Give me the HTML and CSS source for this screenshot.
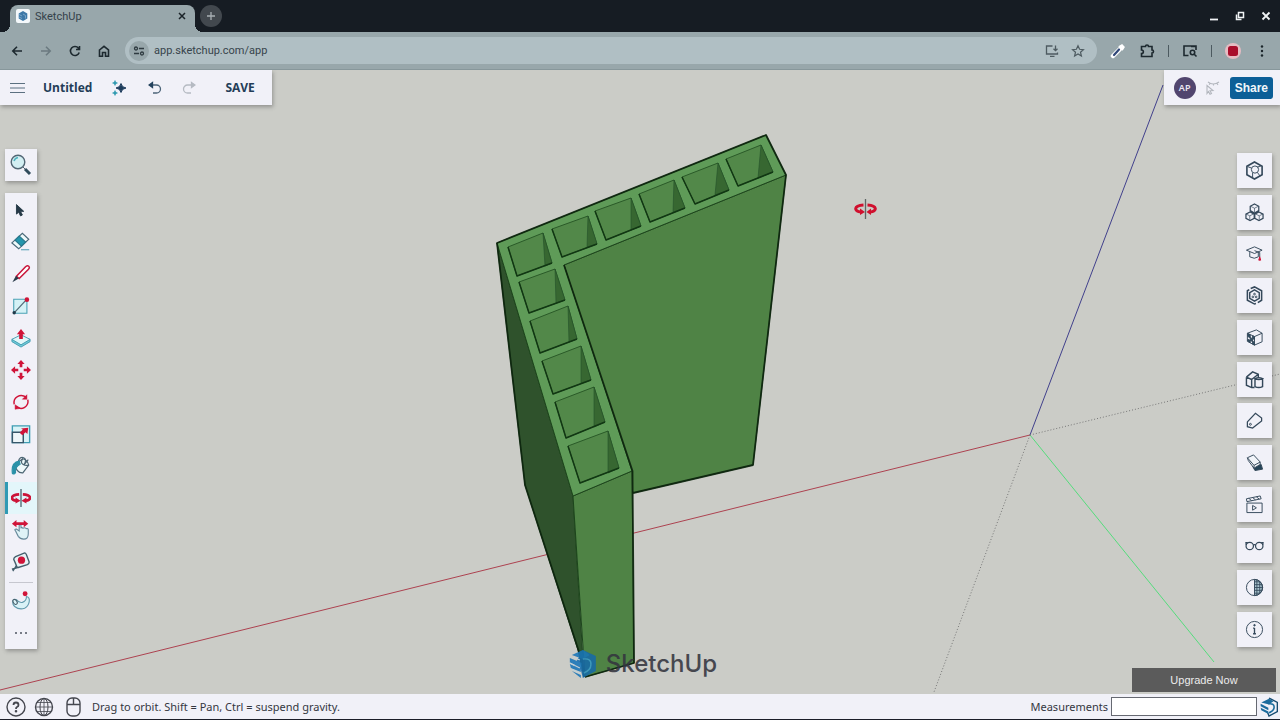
FILE: index.html
```html
<!DOCTYPE html>
<html lang="en">
<head>
<meta charset="utf-8">
<meta name="viewport" content="width=device-width, initial-scale=1">
<title>SketchUp</title>
<link rel="stylesheet" href="styles.css">
</head>
<body>
<header class="browser">
  <div class="tabstrip">
    <div class="tab">
      <svg class="favicon" viewBox="0 0 14 14"><rect width="14" height="14" rx="2" fill="#f4f8fb"/><path d="M7 2l4.300 2.500v5L7 12 2.700 9.500v-5z" fill="#3c78a8"/><path d="M3 5.500l3 1.500M3 8l3 1.500M7 5l2.500 1.500v3" stroke="#8fb8d6" fill="none" stroke-width=".7"/></svg>
      <span class="tab-title">SketchUp</span>
      <button class="icon-btn tab-close" aria-label="Close tab"><svg width="8" height="8" viewBox="0 0 8 8"><path d="M1 1l6 6M7 1l-6 6" stroke="#1b2429" stroke-width="1.500"/></svg></button>
    </div>
    <button class="icon-btn new-tab" aria-label="New tab"><svg width="10" height="10" viewBox="0 0 10 10"><path d="M5 1v8M1 5h8" stroke="#a9b0b4" stroke-width="1.300"/></svg></button>
    <div class="window-controls">
      <button class="icon-btn" aria-label="Minimize"><svg width="12" height="12" viewBox="0 0 12 12"><path d="M2 9.500h8" stroke="#f0f3f5" stroke-width="1.800"/></svg></button>
      <button class="icon-btn" aria-label="Restore"><svg width="12" height="12" viewBox="0 0 12 12" fill="none" stroke="#f0f3f5" stroke-width="1.500"><path d="M4.500 2.500h5v5h-5zM2.500 4.500v5h5"/></svg></button>
      <button class="icon-btn" aria-label="Close"><svg width="12" height="12" viewBox="0 0 12 12"><path d="M2.500 2.500l7 7M9.500 2.500l-7 7" stroke="#f0f3f5" stroke-width="1.800"/></svg></button>
    </div>
  </div>
  <div class="navbar">
    <div class="nav-buttons">
      <button class="icon-btn" aria-label="Back"><svg width="14" height="14" viewBox="0 0 14 14" class="nav-ico"><path d="M12 7H3M7 2.800L2.800 7 7 11.200"/></svg></button>
      <button class="icon-btn" aria-label="Forward" disabled><svg width="14" height="14" viewBox="0 0 14 14" class="nav-ico faded"><path d="M2 7h9M7 2.800L11.200 7 7 11.200"/></svg></button>
      <button class="icon-btn" aria-label="Reload"><svg width="14" height="14" viewBox="0 0 14 14" class="nav-ico"><path d="M11.200 8.500A4.500 4.500 0 1 1 10.500 4.200L11.500 5.300M11.500 2v3.500H8"/></svg></button>
      <button class="icon-btn" aria-label="Home"><svg width="14" height="14" viewBox="0 0 14 14" class="nav-ico"><path d="M2.500 6L7 2.300 11.500 6v6.200h-3V8.500h-3v3.700h-3z"/></svg></button>
    </div>
    <div class="omnibox">
      <span class="site-info"><svg width="12" height="12" viewBox="0 0 12 12" fill="none" stroke="#2f3b41" stroke-width="1.300"><circle cx="3" cy="3.500" r="1.500"/><path d="M6 3.500h5M1 8.500h5"/><circle cx="9" cy="8.500" r="1.500"/></svg></span>
      <input class="url" type="text" aria-label="Address" value="app.sketchup.com/app">
      <button class="icon-btn" aria-label="Install app"><svg width="14" height="14" viewBox="0 0 14 14" fill="none" stroke="#4e5b61" stroke-width="1.300"><path d="M7.500 2H1.500v8h11V8.500M5 12.300h4.500M10.500 1.500v5M8.500 4.700l2 2 2-2"/></svg></button>
      <button class="icon-btn" aria-label="Bookmark"><svg width="14" height="14" viewBox="0 0 14 14" fill="none" stroke="#4e5b61" stroke-width="1.200"><path d="M7 1.800l1.600 3.500 3.800.4-2.900 2.500.9 3.800L7 10l-3.400 2 .9-3.800L1.600 5.700l3.800-.4z"/></svg></button>
    </div>
    <div class="extensions">
      <button class="icon-btn" aria-label="Color picker"><svg width="16" height="16" viewBox="0 0 16 16"><path d="M3 13l7-7" stroke="#fff" stroke-width="4.500" stroke-linecap="round"/><path d="M9.500 3.500l3 3 1.500-2.500-2-2z" fill="#fff" stroke="#fff" stroke-width="1.500"/><path d="M4 12l5-5.500" stroke="#304778" stroke-width="2.200" stroke-linecap="round"/></svg></button>
      <button class="icon-btn" aria-label="Extensions"><svg width="16" height="16" viewBox="0 0 16 16" class="nav-ico"><path d="M2.500 3.500h4c0-2 3-2 3 0H13V7c2 0 2 3 0 3v3.500H2.500V10.500c2.500 0 2.500-3.500 0-3.500z"/></svg></button>
      <span class="sep"></span>
      <button class="icon-btn" aria-label="Search tabs"><svg width="16" height="16" viewBox="0 0 16 16" class="nav-ico"><path d="M6.500 12.500H2V3h12v4M9 3.500h5"/><circle cx="10.500" cy="9.500" r="2.200"/><path d="M12.200 11.200l2.300 2.300"/></svg></button>
      <span class="sep"></span>
      <button class="icon-btn" aria-label="Recorder"><svg width="16" height="16" viewBox="0 0 16 16"><circle cx="8" cy="8" r="8" fill="#e6bcc3"/><rect x="3" y="3" width="10" height="10" rx="2.500" fill="#a90d2b"/></svg></button>
      <button class="icon-btn" aria-label="Menu"><svg width="16" height="16" viewBox="0 0 16 16" fill="#1a2429"><circle cx="8" cy="3.500" r="1.200"/><circle cx="8" cy="8" r="1.200"/><circle cx="8" cy="12.500" r="1.200"/></svg></button>
    </div>
  </div>
</header>

<main class="workspace">
  <svg class="scene" viewBox="0 70 1280 624" preserveAspectRatio="xMidYMid slice" role="img" aria-label="Green L-shaped hollow wall model">
    <g fill="none" stroke-width="1">
      <path d="M0 690L1030 435" stroke="#ad4250"/>
      <path d="M1030 435L1163 85" stroke="#41408c"/>
      <path d="M1030 435L1214 662" stroke="#55dc7c"/>
      <path d="M1030 435L1280 374M1030 435L934 692" stroke="#777" stroke-dasharray="1 2"/>
    </g>
    <g stroke="#1d451c" stroke-width="1" stroke-linejoin="round">
      <path d="M497 243L573 496L584 677L578 650L525 485z" fill="#2f522c"/>
      <path d="M564 265L786 175L753 465L633 493z" fill="#4f8345"/>
      <path d="M573 496L632 471L634 663L585 677z" fill="#4f8345"/>
      <path d="M497 243L766 135L786 175L564 265L632 471L573 496z" fill="#5f9b58"/>
    </g>
    <g fill="#528849" stroke="#2a5a28" stroke-width="1" stroke-linejoin="round">
      <path d="M508 247L543 233L552 263L517 276z"/>
      <path d="M552 229L588 216L597 244L562 257z"/>
      <path d="M595 211L631 198L641 226L606 240z"/>
      <path d="M639 194L674 180L685 208L650 222z"/>
      <path d="M682 177L718 163L729 190L695 204z"/>
      <path d="M726 159L761 145L773 172L738 186z"/>
      <path d="M519 282L555 269L565 300L529 313z"/>
      <path d="M530 321L568 306L577 339L540 353z"/>
      <path d="M542 361L581 346L591 380L553 394z"/>
      <path d="M555 402L594 387L605 422L566 438z"/>
      <path d="M568 446L608 431L619 468L580 483z"/>
    </g>
    <path fill="#376731" stroke="#24502a" stroke-width=".6" d="M543 233L552 263L545 266zM588 216L597 244L587 247zM631 198L641 226L631 230zM674 180L685 208L673 212zM718 163L729 190L715 195zM761 145L773 172L758 178zM555 269L565 300L556 303zM568 306L577 339L569 342zM581 346L591 380L581 383zM594 387L605 422L594 427zM608 431L619 468L608 473z"/>
    <path fill="none" stroke="#113713" stroke-width="1.500" stroke-linejoin="round" d="M508 247L517 276L552 263M552 229L562 257L597 244M595 211L606 240L641 226M639 194L650 222L685 208M682 177L695 204L729 190M726 159L738 186L773 172M519 282L529 313L565 300M530 321L540 353L577 339M542 361L553 394L591 380M555 402L566 438L605 422M568 446L580 483L619 468"/>
    <path fill="none" stroke="#0c240d" stroke-width="1.800" stroke-linejoin="round" d="M585 677L634 663L632.500 471L564 265M633 493L753 465L786 175L766 135L497 243L525 485L579 652" stroke-opacity=".9"/>
    <g transform="translate(855 199)">
      <path d="M8.500 6C-1.500 6.500 -1.500 12.500 6 13M12.500 6c10 .5 10 6.500 2.500 7" fill="none" stroke="#d0102e" stroke-width="3"/>
      <path d="M5 9.500l5 3.500-5 3zM16 9.500l-4.500 3.500 4.500 3z" fill="#d0102e"/><path d="M10.500 0v20" stroke="#5f6664" stroke-width="1.300"/>
    </g>
  </svg>

  <div class="panel topbar">
    <button class="icon-btn" aria-label="Main menu"><svg width="16" height="12" viewBox="0 0 16 12" stroke="#5b7080" stroke-width="1.200"><path d="M0 1.500h15M0 6h15M0 10.500h15"/></svg></button>
    <button class="text-btn doc-name">Untitled</button>
    <button class="icon-btn" aria-label="Assistant"><svg width="16" height="16" viewBox="0 0 16 16"><path d="M9 3.500q.8 4 5 4.500-4.200.5-5 4.500-.8-4-5-4.500 4.200-.5 5-4.500z" fill="#1d3c5c" stroke="#1d3c5c"/><path d="M3 .5q.3 2 2.500 2.500Q3.300 3.300 3 5.500 2.700 3.300.5 3 2.700 2.700 3 .5zM3 10.500q.3 2 2.500 2.500-2.200.3-2.500 2.500-.3-2.200-2.500-2.500 2.200-.5 2.500-2.500z" fill="#2796ad" stroke="#2796ad" stroke-width=".5"/></svg></button>
    <button class="icon-btn" aria-label="Undo"><svg width="14" height="14" viewBox="0 0 14 14" fill="none" stroke="#4c6478" stroke-width="1.300"><path d="M2 4h6.500a4 4 0 0 1 0 8H5"/><path d="M4.500 1.500L1 4l3.500 2.500z" fill="#24435e" stroke="#24435e"/></svg></button>
    <button class="icon-btn" aria-label="Redo" disabled><svg width="14" height="14" viewBox="0 0 14 14" fill="none" stroke="#b5bac2" stroke-width="1.300"><path d="M12 4H5.500a4 4 0 0 0 0 8H9"/><path d="M9.500 1.500L13 4 9.500 6.500z" fill="#b5bac2"/></svg></button>
    <button class="text-btn save">SAVE</button>
  </div>

  <div class="panel account">
    <button class="avatar">AP</button>
    <svg width="16" height="14" viewBox="0 0 16 14" fill="none" stroke="#b2b6bd" stroke-width="1.100"><path d="M2 4.500l6 5-3 .2 1.500 2.800-1.500.8L3.500 10.500 2 12.500zM3 1q5 4 11 0M5 2.500l-.8 1.300M8.500 3v1.600M12 2.500l1 1.300"/></svg>
    <button class="share">Share</button>
  </div>

  <button class="panel search-tool" aria-label="Search"><svg width="22" height="22" viewBox="0 0 22 22"><circle cx="8" cy="8" r="6.800" fill="#d3eff3" stroke="#526775" stroke-width="1.400"/><path d="M4 7q1-3 4-3.500" stroke="#51b3bf" fill="none" stroke-width="1.500"/><path d="M13 13l2 2" stroke="#526775"/><path d="M15 15l5 5" stroke="#304b5b" stroke-width="3"/></svg></button>

  <nav class="panel toolbox" aria-label="Tools">
    <button class="tool" aria-label="Select"><svg viewBox="0 0 22 22"><path d="M6 5v10.500l2.500-2 2 4 2-1-2-4h3.500z" fill="#263947" stroke="#263947"/></svg></button>
    <button class="tool" aria-label="Eraser"><svg viewBox="0 0 22 22" fill="#eef9fa" stroke="#496878" stroke-width="1.300"><path d="M1 12L12.500 1.500 19.500 8 8.500 18.500z"/><path d="M4.500 9L9 4.500l7 6.500-4.500 4.500z" fill="#2396ad" stroke="#28798e"/><path d="M11 19.500h9" stroke="#67a9bd"/></svg></button>
    <button class="tool" aria-label="Line"><svg viewBox="0 0 22 22"><path d="M6 13.500L16 3q2-2 3.500-.5T19 6L9 16z" fill="#fff" stroke="#c9173c" stroke-width="1.700"/><path d="M5.500 13L1.500 20 8.500 16z" fill="#293b49"/></svg></button>
    <button class="tool" aria-label="Rectangle"><svg viewBox="0 0 22 22"><path d="M3 3.500h14.500V19H3z" fill="#d5f2f6" stroke="#4ba2b5" stroke-width="1.200"/><path d="M4 18L17 4" stroke="#526b77" stroke-width="1.400"/><circle cx="17.500" cy="4" r="2.500" fill="#cf1438"/><circle cx="3.500" cy="18.500" r="1.900" fill="#1e3848"/></svg></button>
    <button class="tool" aria-label="Push/Pull"><svg viewBox="0 0 22 22"><path d="M1 12.500v2.500l10 6 10-6v-2.500z" fill="#70cad8" stroke="#4099ae"/><path d="M1 12.500l10-5 10 5-10 6z" fill="#e2f7f9" stroke="#4099ae"/><path d="M9 12V7H6.500L11 1l4.500 6H13v5z" fill="#d01439"/></svg></button>
    <button class="tool" aria-label="Move"><svg viewBox="0 0 22 22" fill="#d01439"><path d="M11 0l4 4.500h-2.500V8h-3V4.500H7zM11 22l4-4.500h-2.500V14h-3v3.500H7zM0 11l4.500-4v2.500H8v3H4.500V15zM22 11l-4.500-4v2.500H14v3h3.500V15z"/></svg></button>
    <button class="tool" aria-label="Rotate"><svg viewBox="0 0 22 22" fill="none" stroke="#d01439" stroke-width="1.600"><path d="M3.500 13.500C2 6 10 1 17 6M18.500 8.500C20 16 12 21 5.500 16"/><path d="M17.500 3v5h-5zM4.500 14v5l6-1z" fill="#d01439" stroke-width=".5"/></svg></button>
    <button class="tool" aria-label="Scale"><svg viewBox="0 0 22 22"><path d="M1.500 2h19v18.500h-19z" fill="#d9f3f7" stroke="#3f9db3" stroke-width="1.500"/><path d="M1.500 9h12v11.500h-12z" fill="#eef6f9" stroke="#36576a" stroke-width="1.600"/><path d="M19 4l-1 7-2-2-3.500 3.500-3-3L13 6l-2-1z" fill="#d01439"/></svg></button>
    <button class="tool" aria-label="Paint"><svg viewBox="0 0 22 22" fill="none" stroke="#4b6573" stroke-width="1.300"><path d="M4.500 9.500L13 3q5 1 6.500 7L13 18.500Q6 19 4.500 9.500z" fill="#eef8fa"/><path d="M13 3q-3 4 0 6t6.500 1M8 6Q10 0 14 2t0 8M14 10l5-6"/><path d="M9 5.500Q0 7 1.500 19q2 2 3.500-1-1-6 5-9z" fill="#2a91a8" stroke="#2a91a8"/></svg></button>
    <button class="tool active" aria-label="Orbit" aria-pressed="true"><svg viewBox="0 0 22 22"><path d="M9 7C-1 7.500 -1 13.500 6 14M13 7c10 .5 10 6.500 3 7" fill="none" stroke="#cc1438" stroke-width="3"/><path d="M5 10.500l5.500 3.500-5.500 3zM17 10.500L11.500 14l5.500 3z" fill="#cc1438"/><path d="M11 1v20" stroke="#46606b" stroke-width="1.400"/></svg></button>
    <button class="tool" aria-label="Pan"><svg viewBox="0 0 22 22"><path d="M9 6v6L6 10q-3 0-1 2l3 6q2 3 6 3 5 0 5-6v-4q0-2-2-1.500Q15 8 13 9q-1-1-2-.5V6q-1-2-2 0z" fill="#dff3f7" stroke="#66899a" stroke-width="1.200"/><path d="M1 4l5-4v2.500h8V0l5 4-5 4V5.500H6V8z" fill="#d01439"/></svg></button>
    <button class="tool" aria-label="Tape measure"><svg viewBox="0 0 22 22" stroke="#435e6b" stroke-width="1.500"><path d="M5 5l10-4q1 0 2 2l3 8q0 2-2 3L8 17q-2 0-2-2L3 8q0-2 2-3z" fill="#e8f2f5"/><path d="M8 17l-7 2M6 15l-4 6" fill="none"/><circle cx="11.500" cy="9" r="4" fill="#d01439" stroke="none"/></svg></button>
    <hr class="tool-divider">
    <button class="tool" aria-label="Flex tool"><svg viewBox="0 0 22 22" fill="#d9f2f7" stroke="#619aad" stroke-width="1.200"><path d="M2 11q1-3 4-1.500 3 4 6.500 3Q17 11 17 6q4 1 3 6t-5 7q-6 2-11-2-2.500-2-2-6z"/><ellipse cx="4.500" cy="12" rx="2" ry="3" transform="rotate(-35 4.500 12)" stroke="#48606c"/><circle cx="15.500" cy="3" r="2.700" fill="#d01439" stroke="none"/></svg></button>
    <button class="tool" aria-label="More tools"><svg viewBox="0 0 22 22" fill="#4d5360"><circle cx="5.500" cy="11" r="1.100"/><circle cx="11" cy="11" r="1.100"/><circle cx="16.500" cy="11" r="1.100"/></svg></button>
  </nav>

  <nav class="tray" aria-label="Panels">
    <button class="panel tray-btn" aria-label="Entity info"><svg viewBox="0 0 20 20"><path d="M10 1l8 4.500v9L10 19l-8-4.500v-9z" stroke-width="1.700"/><circle cx="10.500" cy="9" r="3.800"/><path d="M3 6l4 1.500M13 6.500L17 5M8 12.500V17M13 12l3 4"/></svg></button>
    <button class="panel tray-btn" aria-label="Components"><svg viewBox="0 0 20 20"><path d="M10 1l4.500 2.500v4.500L10 10.500 5.500 8V3.500zM5.300 9.500l4.400 2.300v4.400l-4.400 2.300L1 16.200v-4.400zM14.700 9.500l4.300 2.300v4.400l-4.300 2.300-4.400-2.300v-4.400z" stroke-width="1.300"/><path d="M6 3.500l4 2 4-2M10 5.500v4M1 11.500l4 2 4-2M5 13.500v4M11 11.500l4 2 4-2M15 13.500v4" stroke-width=".7"/></svg></button>
    <button class="panel tray-btn" aria-label="Instructor"><svg viewBox="0 0 20 20"><path d="M1.500 6.500L10 3l8 3.500-8 3.500zM5 8.500v5q5 3 9 0v-5M10 7l5.500 2v5"/><path d="M15.500 13.500l1 3.500h-2z" fill="#d01439" stroke="#d01439"/></svg></button>
    <button class="panel tray-btn" aria-label="3D Warehouse"><svg viewBox="0 0 20 20"><path d="M6 2.700L10 1l7.500 4v10l-4 2.500M11.500 18.500L10 19l-7.500-4V5l2-1.200" stroke-width="1.600"/><path d="M10 4l5 3v6l-5 3-5-3V7z" stroke-width="1.500"/><circle cx="10" cy="8.500" r=".9"/><circle cx="8.300" cy="11.500" r=".9"/><circle cx="11.700" cy="11.500" r=".9"/></svg></button>
    <button class="panel tray-btn" aria-label="Materials"><svg viewBox="0 0 20 20"><path d="M2.500 5.500L12 2l6 3.500v9L10 18l-7.500-4zM2.500 5.500L10 9l8-3.500M10 9v9"/><path d="M3 6l2.500 1.200v3L3 9zM5.500 10l2.500 1.300v3l-2.500-1.200zM8 8.300l2 .7v3l-2-.8zM3 12l2.500 1v2.500L3 14zM8 14l2 1v3l-2-1z" fill="#2f5065"/></svg></button>
    <button class="panel tray-btn" aria-label="Styles"><svg viewBox="0 0 20 20" stroke-width="1.500"><path d="M1.500 7.500L8 2l6 2.500v3M1.500 7.500v8.500L7 18.500h3M1.500 7.500L7 10v8.500M7 10l7-5.500"/><path d="M10.500 9v8.500q4 2 8 0V9M10.500 9q4 2 8 0-4-2-8 0z"/></svg></button>
    <button class="panel tray-btn" aria-label="Tags"><svg viewBox="0 0 20 20"><path d="M2.500 11.500L11 2.500l6.500 5v3L8 18l-5.500-1.500z" stroke-width="1.300"/><circle cx="5.700" cy="14" r="1"/></svg></button>
    <button class="panel tray-btn" aria-label="Shadows"><svg viewBox="0 0 20 20"><path d="M8 14l9-2 1.500 5-8 1.500z" fill="#254458"/><path d="M2.500 5l6.500-3 7 7.500V12L9.500 16 3.500 8z" fill="#f1f4f9"/><path d="M2.500 5l7 8 6.500-3.500M9.500 13v3"/></svg></button>
    <button class="panel tray-btn" aria-label="Scenes"><svg viewBox="0 0 20 20"><path d="M2 8.500h16v10H2zM2 7L1.500 4 16 1l1 3zM4 3.500l3 2.500M8 2.700L11 5M12 2l3 2.300"/><path d="M8 11l4 2.500L8 16z"/></svg></button>
    <button class="panel tray-btn" aria-label="Display"><svg viewBox="0 0 20 20" stroke-width="1.300"><circle cx="5" cy="10.500" r="3.900"/><circle cx="15" cy="10.500" r="3.900"/><path d="M8.700 9.500q1.300-1 2.600 0M1.300 9.500L1 7h2M18.700 9.500L19 7h-2"/></svg></button>
    <button class="panel tray-btn" aria-label="Soften edges"><svg viewBox="0 0 20 20"><path d="M10 1.500a8.500 8.500 0 0 1 0 17z" fill="#a8c3cc"/><circle cx="10" cy="10" r="8.500"/><path d="M10 4h6M10 7h8M10 10h9M10 13h8M10 16h6M12.500 2v16M15.500 4v12" stroke-width=".9"/></svg></button>
    <button class="panel tray-btn" aria-label="Model info"><svg viewBox="0 0 20 20"><circle cx="10" cy="10" r="8.500"/><path d="M10 8.500v6M8.500 8.500H10M8.500 14.500h3" stroke-width="1.400"/><circle cx="10" cy="5.500" r=".8" fill="#34485a"/></svg></button>
  </nav>

  <div class="watermark">
    <svg width="28" height="30" viewBox="0 0 28 30"><path d="M14 1L27 7v15L14 29l-2-8-7-4z" fill="#176aa9"/><path d="M3 6l11-5 7 5-7 4zM1 9l12 5v5L1 13.500zM1 15l11 5v3L2 19zM3 22l9 4v3z" fill="#1875b9"/><path d="M14 10q9-1 8 6 0 5-7 8" stroke="#3c9bc9" stroke-width="1.500" fill="none"/><path d="M1 14l10 5M2 20l9 4M4 8l7 3" stroke="#c1d2da" stroke-width="1.200"/></svg>
    <span>SketchUp</span>
  </div>
  <button class="upgrade">Upgrade Now</button>
</main>

<footer class="statusbar">
  <button class="icon-btn" aria-label="Help"><svg width="20" height="20" viewBox="0 0 20 20" class="status-ico"><circle cx="10" cy="10" r="9"/><path d="M7.500 8q0-2.500 2.500-2.500T12.500 8q0 1.300-1.500 2-1 .5-1 2" stroke-width="1.800"/><circle cx="10" cy="14.300" r=".6" fill="#45474f"/></svg></button>
  <button class="icon-btn" aria-label="Language"><svg width="20" height="20" viewBox="0 0 20 20" class="status-ico"><circle cx="10" cy="10" r="8.500"/><ellipse cx="10" cy="10" rx="4" ry="8.500" stroke-width="1"/><path d="M10 1.500v17M1.500 10h17M3 5.500h14M3 14.500h14" stroke-width=".8"/></svg></button>
  <button class="icon-btn" aria-label="Mouse"><svg width="22" height="22" viewBox="0 0 22 22" class="status-ico"><rect x="5" y="2" width="13" height="18" rx="5"/><path d="M5 8.500h13M11.500 2v6.500"/></svg></button>
  <span class="hint">Drag to orbit. Shift = Pan, Ctrl = suspend gravity.</span>
  <label class="measure-label" for="measure">Measurements</label>
  <input class="measure" id="measure" type="text">
  <svg width="18" height="20" viewBox="0 0 28 30" aria-hidden="true"><path d="M14 1l13 7v14l-13 7-2-5" fill="none" stroke="#164b70" stroke-width="2.200"/><path d="M2 8l12-6 7 4-7 5M1 10l12 6v4L1 14zM1 16l12 6v4L2 20z" fill="#1c6c9d"/><path d="M13 10q9-1 9 5t-8 9" fill="none" stroke="#1c6c9d" stroke-width="2.500"/></svg>
</footer>
</body>
</html>
```

FILE: styles.css
```css
* { box-sizing: border-box; }

body {
  margin: 0;
  height: 100vh;
  display: flex;
  flex-direction: column;
  overflow: hidden;
  font-family: "Noto Sans", "Open Sans", sans-serif;
  font-size: 11px;
  color: #34373f;
}

button, input { font: inherit; color: inherit; }
button { border: 0; background: none; padding: 0; }
svg { display: block; }
.icon-btn { display: grid; place-items: center; flex: none; }

/* Browser chrome */
.tabstrip {
  display: flex;
  align-items: center;
  height: 32px;
  padding: 0 8px 0 10px;
  background: #161c23;
}
.tab {
  position: relative;
  align-self: flex-end;
  display: flex;
  align-items: center;
  gap: 5px;
  width: 185px;
  height: 27px;
  padding: 0 8px 5px 6px;
  border-radius: 8px 8px 0 0;
  background: #98a7ab;
}
.tab::before, .tab::after {
  content: "";
  position: absolute;
  bottom: 0;
  width: 8px;
  height: 8px;
}
.tab::before { left: -8px; background: radial-gradient(circle at 0 0, #161c23 8px, #98a7ab 8px); }
.tab::after { right: -8px; background: radial-gradient(circle at 100% 0, #161c23 8px, #98a7ab 8px); }
.favicon { width: 14px; height: 14px; }
.tab-title { flex: 1; font-family: Roboto, sans-serif; color: #34424a; }
.tab-close { width: 10px; height: 16px; }
.new-tab {
  width: 22px;
  height: 22px;
  margin-left: 5px;
  border-radius: 50%;
  background: #42484e;
}
.window-controls { display: flex; gap: 14px; margin-left: auto; }

.navbar {
  display: flex;
  align-items: center;
  height: 38px;
  padding: 0 10px;
  background: #98a7ab;
  border-bottom: 1px solid #87979b;
}
.nav-buttons { display: flex; gap: 15px; }
.nav-ico { fill: none; stroke: #1d292f; stroke-width: 1.6; }
.faded { stroke: #6b7a80; }
.omnibox {
  flex: 1;
  display: flex;
  align-items: center;
  gap: 12px;
  height: 27px;
  margin-left: 14px;
  padding: 0 12px 0 4px;
  border-radius: 14px;
  background: #b0bfc4;
}
.site-info {
  display: grid;
  place-items: center;
  width: 20px;
  height: 20px;
  border-radius: 50%;
  background: #98a7ab;
}
.url {
  flex: 1;
  min-width: 0;
  margin-left: -7px;
  border: 0;
  padding: 0;
  background: none;
  font-family: Roboto, sans-serif;
  font-size: 11px;
  color: #37444b;
  outline: 0;
}
.extensions { display: flex; align-items: center; gap: 13px; margin-left: 13px; }
.sep { width: 1px; height: 12px; background: #4c5a60; }

/* Modelling area */
.workspace { position: relative; flex: 1; min-height: 0; background: #cbccc7; overflow: hidden; }
.scene { position: absolute; inset: 0; width: 100%; height: 100%; }
.panel { background: #f1f1f8; box-shadow: 1px 2px 4px rgba(60, 60, 60, .4); }

.topbar {
  position: absolute;
  top: 0;
  left: 0;
  display: flex;
  align-items: center;
  height: 35px;
  padding: 0 17px 0 10px;
}
.doc-name { margin: 0 20px 0 17px; }
.text-btn { font-family: "Open Sans", sans-serif; font-weight: 700; font-size: 12px; color: #233d57; }
.topbar .icon-btn + .icon-btn { margin-left: 20px; }
.topbar .save { margin-left: 29px; }

.account {
  position: absolute;
  top: 0;
  right: 0;
  display: flex;
  align-items: center;
  gap: 9px;
  height: 35px;
  padding: 0 7px 0 10px;
}
.avatar {
  width: 22px;
  height: 22px;
  border-radius: 50%;
  background: #51456e;
  color: #e9e5f2;
  font-size: 9px;
  font-weight: 600;
}
.share {
  height: 22px;
  padding: 0 5px;
  border-radius: 3px;
  background: #0c5f97;
  color: #f2f7fb;
  font-family: "Liberation Sans", Arial, sans-serif;
  font-size: 12px;
  font-weight: 700;
}

.search-tool {
  position: absolute;
  left: 5px;
  top: 79px;
  display: grid;
  place-items: center;
  width: 32px;
  height: 32px;
}
.toolbox {
  position: absolute;
  left: 5px;
  top: 123px;
  width: 32px;
  padding-top: 1px;
  display: flex;
  flex-direction: column;
}
.tool { display: grid; place-items: center; width: 32px; height: 32px; }
.tool svg { width: 20px; height: 20px; }
.tool.active { background: #e3f6fa; box-shadow: inset 3px 0 #2f9ab4; }
.tool-divider { width: 24px; margin: 4px auto 2px; border: 0; border-top: 1px solid #c6c7cf; }

.tray {
  position: absolute;
  right: 8px;
  top: 83px;
  bottom: 47px;
  display: flex;
  flex-direction: column;
  justify-content: space-between;
}
.tray-btn { display: grid; place-items: center; width: 35px; height: 35px; }
.tray-btn svg { width: 19px; height: 19px; fill: none; stroke: #34485a; }

.watermark {
  position: absolute;
  left: 50%;
  bottom: 15px;
  transform: translateX(-50%);
  display: flex;
  align-items: center;
  gap: 9px;
  margin-left: 3px;
  font-family: Inter, sans-serif;
  font-size: 24px;
  line-height: 30px;
  font-weight: 500;
  color: #34353f;
  opacity: .88;
}
.upgrade {
  position: absolute;
  right: 4px;
  bottom: 2px;
  width: 144px;
  height: 24px;
  background: #5b5b5b;
  color: #ececec;
  font-family: "Liberation Sans", Arial, sans-serif;
}

/* Status bar */
.statusbar {
  display: flex;
  align-items: center;
  gap: 8px;
  height: 26px;
  padding: 0 2px 0 6px;
  background: #f1f1f8;
  border-bottom: 1px solid #1b1d28;
}
.status-ico { fill: none; stroke: #45474f; stroke-width: 1.4; }
.hint { flex: 1; }
.measure-label { margin-right: -5px; }
.measure {
  width: 146px;
  height: 19px;
  margin-right: -5px;
  padding: 0 4px;
  border: 1px solid #666972;
  background: #fff;
}
```
